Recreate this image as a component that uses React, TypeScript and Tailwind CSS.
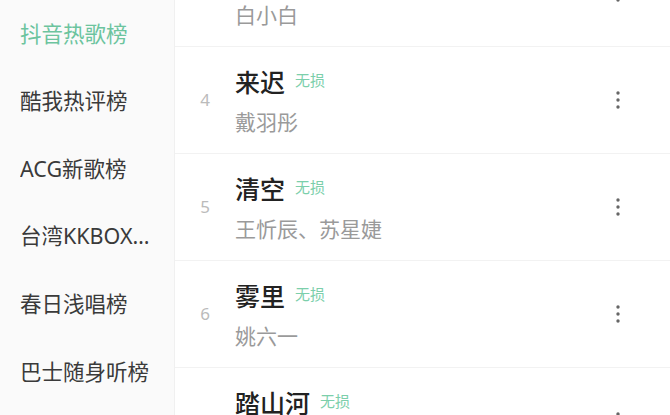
import React from "react";

const cats = ["抖音热歌榜", "酷我热评榜", "ACG新歌榜", "台湾KKBOX新歌榜", "春日浅唱榜", "巴士随身听榜"];

const songs = [
  { n: 3, t: "晚风心里吹", a: "白小白" },
  { n: 4, t: "来迟", a: "戴羽彤" },
  { n: 5, t: "清空", a: "王忻辰、苏星婕" },
  { n: 6, t: "雾里", a: "姚六一" },
  { n: 7, t: "踏山河", a: "是七叔呢" },
];

function Dots() {
  return (
    <svg width="6" height="20" viewBox="0 0 6 20">
      <circle cx="3" cy="3" r="1.7" fill="#666" />
      <circle cx="3" cy="10" r="1.7" fill="#666" />
      <circle cx="3" cy="17" r="1.7" fill="#666" />
    </svg>
  );
}

export default function App() {
  return (
    <div
      className="flex w-[670px] h-[415px] overflow-hidden bg-white"
      style={{ fontFamily: '"Noto Sans", "Noto Sans CJK SC", sans-serif' }}
    >
      <div className="w-[175px] shrink-0 bg-[#fafafa] border-r border-[#f0f0f0] flex flex-col">
        {cats.map((c, i) => (
          <div
            key={c}
            className={`h-[67.6px] shrink-0 flex items-center pl-[20px] pr-[18px] text-[21.5px] ${
              i === 0 ? "text-[#6cc49e]" : "text-[#3a3a3a]"
            }`}
          >
            <span className="truncate">{c}</span>
          </div>
        ))}
      </div>
      <div className="flex-1 flex flex-col mt-[-60px]">
        {songs.map((s) => (
          <div key={s.n} className="h-[107px] shrink-0 flex items-center border-b border-[#f2f2f2]">
            <div className="w-[60px] shrink-0 text-center text-[17px] text-[#bbb]">{s.n}</div>
            <div className="flex-1 flex flex-col justify-center pt-[2px]">
              <div className="flex items-center leading-[30px]">
                <span className="text-[25px] font-medium text-[#222]">{s.t}</span>
                <span className="ml-[10px] text-[15px] text-[#7ccfab] mb-[4px]">无损</span>
              </div>
              <div className="mt-[8px] leading-[30px] text-[21px] text-[#9a9a9a]">{s.a}</div>
            </div>
            <div className="w-[40px] mr-[32px] flex justify-center">
              <Dots />
            </div>
          </div>
        ))}
      </div>
    </div>
  );
}
